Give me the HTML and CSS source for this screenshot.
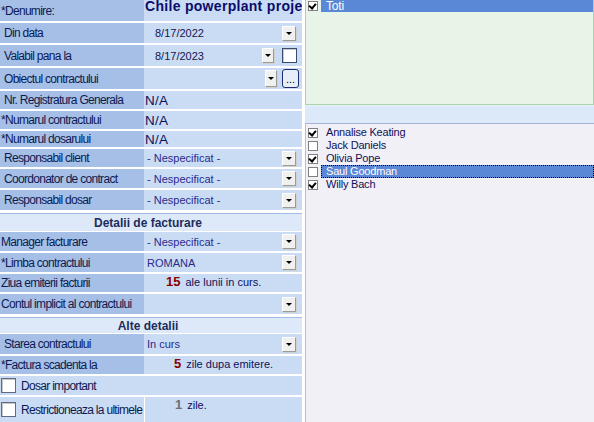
FILE: index.html
```html
<!DOCTYPE html>
<html>
<head>
<meta charset="utf-8">
<link rel="stylesheet" href="styles.css">
</head>
<body>
<div class="screen">
  <div class="form">
    <div class="row h21">
      <div class="lbl tight">*Denumire:</div>
      <div class="val title-cell"><span class="title">Chile powerplant project</span></div>
    </div>
    <div class="row h20">
      <div class="lbl">Din data</div>
      <div class="val"><span class="date">8/17/2022</span><span class="dd"></span></div>
    </div>
    <div class="row h21">
      <div class="lbl">Valabil pana la</div>
      <div class="val"><span class="date">8/17/2023</span><span class="dd dd-mid"></span><span class="chk chk-val"></span></div>
    </div>
    <div class="row h21">
      <div class="lbl">Obiectul contractului</div>
      <div class="val"><span class="fill"></span><span class="dd dd-small"></span><span class="dots">...</span></div>
    </div>
    <div class="row h18">
      <div class="lbl">Nr. Registratura Generala</div>
      <div class="val na">N/A</div>
    </div>
    <div class="row h18">
      <div class="lbl tight">*Numarul contractului</div>
      <div class="val na">N/A</div>
    </div>
    <div class="row h16">
      <div class="lbl tight">*Numarul dosarului</div>
      <div class="val na">N/A</div>
    </div>
    <div class="row h18">
      <div class="lbl">Responsabil client</div>
      <div class="val"><span class="sel">- Nespecificat -</span><span class="dd"></span></div>
    </div>
    <div class="row h19">
      <div class="lbl">Coordonator de contract</div>
      <div class="val"><span class="sel">- Nespecificat -</span><span class="dd"></span></div>
    </div>
    <div class="row h20 last">
      <div class="lbl">Responsabil dosar</div>
      <div class="val"><span class="sel">- Nespecificat -</span><span class="dd"></span></div>
    </div>

    <div class="section">Detalii de facturare</div>

    <div class="row h19">
      <div class="lbl tight">Manager facturare</div>
      <div class="val"><span class="sel">- Nespecificat -</span><span class="dd"></span></div>
    </div>
    <div class="row h19">
      <div class="lbl tight">*Limba contractului</div>
      <div class="val"><span class="sel">ROMANA</span><span class="dd"></span></div>
    </div>
    <div class="row h18">
      <div class="lbl tight">Ziua emiterii facturii</div>
      <div class="val num-cell"><span class="num red n15">15</span><span class="num-text">ale lunii in curs.</span></div>
    </div>
    <div class="row h20 last">
      <div class="lbl tight">Contul implicit al contractului</div>
      <div class="val"><span class="fill"></span><span class="dd"></span></div>
    </div>

    <div class="section section2">Alte detalii</div>

    <div class="row h20">
      <div class="lbl">Starea contractului</div>
      <div class="val"><span class="sel">In curs</span><span class="dd"></span></div>
    </div>
    <div class="row h18">
      <div class="lbl tight">*Factura scadenta la</div>
      <div class="val num-cell"><span class="num red n5">5</span><span class="num-text">zile dupa emitere.</span></div>
    </div>
    <div class="row h19 light">
      <div class="lbl chk-lbl"><span class="chk"></span>Dosar important</div>
      <div class="val"></div>
    </div>
    <div class="row grow light split">
      <div class="lbl chk-lbl"><span class="chk"></span>Restrictioneaza la ultimele</div>
      <div class="val num-cell"><span class="num grey n1">1</span><span class="num-text">zile.</span></div>
    </div>
  </div>

  <div class="side">
    <div class="top-list">
      <div class="item selected"><span class="cb on"></span><span class="item-text">Toti</span></div>
    </div>
    <div class="strip"></div>
    <div class="bottom-list">
      <div class="item"><span class="cb on"></span><span class="item-text">Annalise Keating</span></div>
      <div class="item"><span class="cb"></span><span class="item-text">Jack Daniels</span></div>
      <div class="item"><span class="cb on"></span><span class="item-text">Olivia Pope</span></div>
      <div class="item selected focus"><span class="cb"></span><span class="item-text">Saul Goodman</span></div>
      <div class="item"><span class="cb on"></span><span class="item-text">Willy Bach</span></div>
    </div>
  </div>
</div>
</body>
</html>
```

FILE: styles.css
```css
html, body {
  margin: 0;
  padding: 0;
  background: #ffffff;
}

body {
  font-family: "Liberation Sans", Arial, sans-serif;
  color: #0d1a52;
}

.screen {
  display: flex;
  width: 594px;
  height: 422px;
  overflow: hidden;
}

.form {
  width: 302px;
  flex: none;
  display: flex;
  flex-direction: column;
  margin-right: 3px;
}

.row {
  display: grid;
  grid-template-columns: 144px 1fr;
  margin-bottom: 2px;
  flex: none;
}

.row.last { margin-bottom: 3px; }

.h16 { height: 16px; }
.h18 { height: 18px; }
.h19 { height: 19px; }
.h20 { height: 20px; }
.h21 { height: 21px; }
.grow { flex: 1; margin-bottom: 0; }

.lbl {
  background: #a5bfe6;
  font-size: 12px;
  letter-spacing: -0.7px;
  display: flex;
  align-items: center;
  padding-left: 4px;
  white-space: nowrap;
  overflow: hidden;
  color: #0d1a52;
}

.lbl.tight { padding-left: 1px; }

.val {
  background: #c9dcf4;
  display: flex;
  align-items: center;
  white-space: nowrap;
  overflow: hidden;
  min-width: 0;
}

.light .lbl { background: #c9dcf4; }
.split .val { border-left: 1px solid #ffffff; }

.title-cell {
  align-items: flex-start;
  overflow: hidden;
}

.title {
  font-weight: bold;
  font-size: 14px;
  letter-spacing: 0.3px;
  color: #0c0c6c;
  line-height: 13px;
  margin-left: 1px;
}

.date {
  font-size: 11px;
  color: #141450;
  margin-left: 11px;
  flex: 1;
}

.sel {
  font-size: 11px;
  color: #2a2a8c;
  margin-left: 3px;
  flex: 1;
}

.fill { flex: 1; }

.na {
  font-size: 13.5px;
  color: #10105a;
  padding-left: 1px;
  letter-spacing: 0.2px;
}

.dd {
  width: 14px;
  height: 15px;
  box-sizing: border-box;
  background: #f0f0f0;
  border: 1px solid;
  border-color: #ffffff #9a9a9a #9a9a9a #ffffff;
  box-shadow: 1px 1px 0 #d0d0d0;
  display: flex;
  align-items: center;
  justify-content: center;
  margin-right: 6px;
  flex: none;
}

.dd::after {
  content: "";
  width: 0;
  height: 0;
  border-left: 3px solid transparent;
  border-right: 3px solid transparent;
  border-top: 3px solid #000000;
}

.dd-mid { width: 12px; margin-right: 8px; }
.dd-small { width: 12px; height: 17px; margin-right: 5px; }

.chk {
  width: 15px;
  height: 15px;
  box-sizing: border-box;
  background: #ffffff;
  border: 1px solid #7a8aa8;
  box-shadow: inset 1px 1px 0 #c8c8c8;
  flex: none;
}

.chk-val { margin-right: 5px; border-color: #3a4a70; }

.dots {
  width: 17px;
  height: 19px;
  box-sizing: border-box;
  border: 1px solid #1c2c6c;
  border-radius: 3px;
  background: #e8eef8;
  font-size: 11px;
  color: #000;
  display: flex;
  align-items: flex-end;
  justify-content: center;
  line-height: 11px;
  padding-bottom: 2px;
  margin-right: 3px;
  flex: none;
}

.section {
  height: 17px;
  border-top: 1px solid #9fbbe6;
  background: #dde9f8;
  font-weight: bold;
  font-size: 12px;
  color: #1c2c5c;
  display: flex;
  align-items: center;
  justify-content: center;
  margin-bottom: 1px;
  padding-right: 6px;
  flex: none;
}

.section2 { height: 15px; }

.num-cell { align-items: flex-start; }

.num {
  font-weight: bold;
  font-size: 13px;
  line-height: 13px;
  margin-top: 1px;
}

.red { color: #8a0000; }
.grey { color: #707070; }
.n15 { margin-left: 22px; }
.n5 { margin-left: 30px; }
.n1 { margin-left: 30px; }

.num-text {
  font-size: 11px;
  color: #10105a;
  margin-left: 5px;
  margin-top: 2px;
}

.chk-lbl { padding-left: 1px; }
.chk-lbl .chk { margin-right: 5px; border-color: #606a80; }

.side {
  flex: 1;
  display: flex;
  flex-direction: column;
}

.top-list {
  height: 104px;
  border: 1px solid #a8d4a8;
  border-top: none;
  background: #e8f4e8;
  flex: none;
}

.strip {
  height: 17px;
  background: #dce9f8;
  border-top: 1px solid #e8f0fa;
  flex: none;
}

.bottom-list {
  flex: 1;
  background: #f0f0f6;
  border-top: 1px solid #a4b4d4;
  border-left: 1px solid #bcbcd0;
  padding-top: 2px;
}

.item {
  height: 13px;
  display: flex;
  align-items: center;
  font-size: 11px;
  letter-spacing: -0.2px;
  color: #10105a;
}

.cb {
  width: 10px;
  height: 10px;
  box-sizing: border-box;
  border: 1px solid #808080;
  background: #ffffff;
  margin-left: 2px;
  flex: none;
  position: relative;
}

.cb.on::after {
  content: "";
  position: absolute;
  left: 1px;
  top: 0px;
  width: 3px;
  height: 5px;
  border-right: 2px solid #000;
  border-bottom: 2px solid #000;
  transform: rotate(40deg);
  transform-origin: center;
}

.item-text {
  flex: 1;
  height: 13px;
  line-height: 13px;
  margin-left: 3px;
  padding-left: 5px;
}

.selected .item-text {
  background: #5a88d6;
  color: #ffffff;
}

.top-list .item { height: 12px; }
.top-list .item-text { height: 12px; line-height: 12px; font-size: 12px; }

.focus .item-text {
  outline: 1px dotted #000000;
  outline-offset: -1px;
}
```
